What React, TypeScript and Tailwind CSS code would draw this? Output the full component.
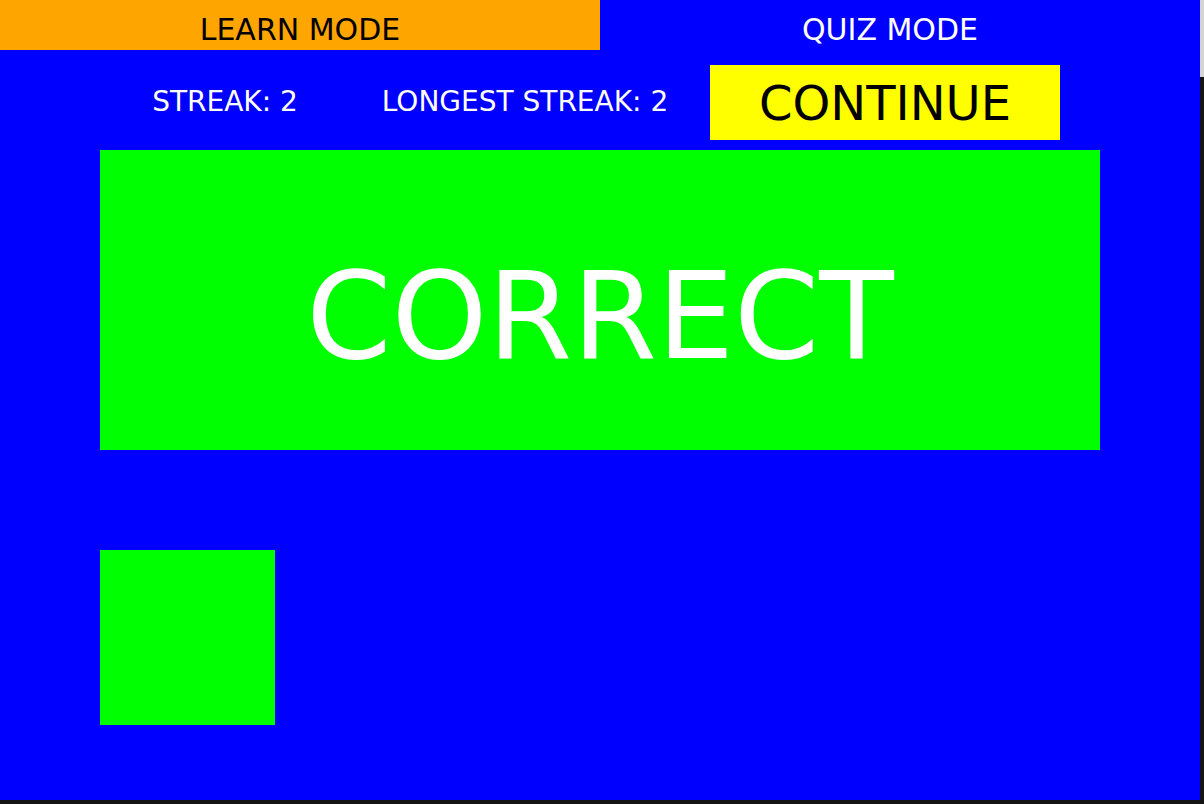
export default function App() {
  return (
    <div className="w-[1204px] h-[804px] bg-[#141414] flex" style={{ fontFamily: '"DejaVu Sans", Verdana, sans-serif' }}>
      <div className="w-[1200px] h-[800px] bg-[#0000ff] flex flex-col">
        {/* tabs */}
        <div className="flex h-[50px]">
          <div className="w-[600px] bg-[#ffa500] flex items-center justify-center text-black text-[30px] pt-[9px]">
            LEARN MODE
          </div>
          <div className="w-[580px] flex items-center justify-center text-white text-[30px] pt-[9px]">
            QUIZ MODE
          </div>
        </div>

        {/* streak row */}
        <div className="flex items-center h-[75px] mt-[15px] pl-[100px]">
          <div className="w-[250px] text-center text-white text-[28px] pb-[2px]">STREAK: 2</div>
          <div className="w-[350px] text-center text-white text-[28px] pb-[2px]">LONGEST STREAK: 2</div>
          <div className="ml-[10px] w-[350px] h-[75px] bg-[#ffff00] flex items-center justify-center text-black text-[48px]">
            CONTINUE
          </div>
        </div>

        {/* result */}
        <div className="mt-[10px] ml-[100px] w-[1000px] h-[300px] bg-[#00ff00] flex items-center justify-center text-white text-[122px] pt-[32px]">
          CORRECT
        </div>

        <div className="mt-[100px] ml-[100px] w-[175px] h-[175px] bg-[#00ff00]" />
      </div>
      <div className="w-[4px] flex flex-col">
        <div className="h-[77px] bg-[#d4d4d4]" />
      </div>
    </div>
  );
}
